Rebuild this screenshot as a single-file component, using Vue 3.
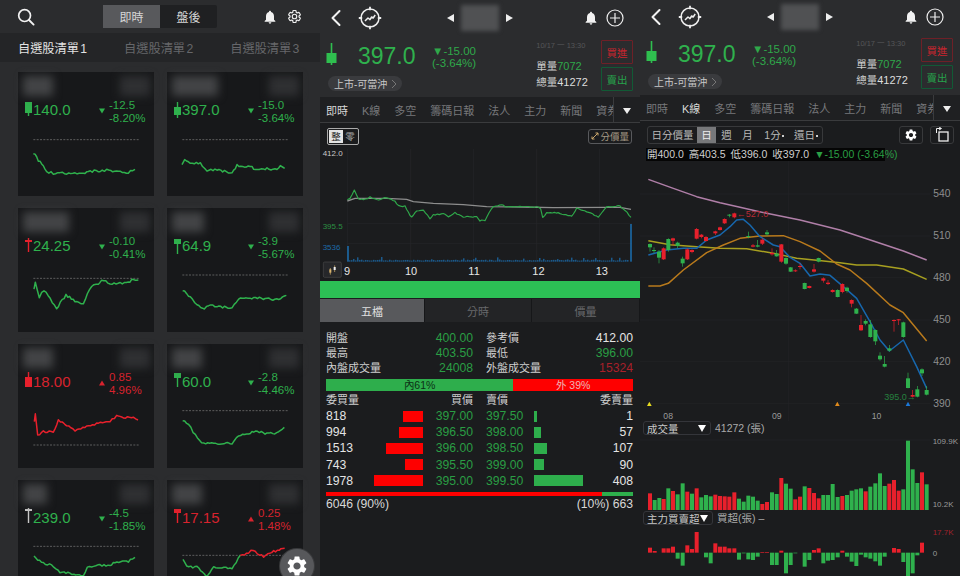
<script setup>
const GEAR = 'M19.14 12.94c.04-.3.06-.61.06-.94 0-.32-.02-.64-.07-.94l2.03-1.58a.49.49 0 0 0 .12-.61l-1.92-3.32a.488.488 0 0 0-.59-.22l-2.39.96c-.5-.38-1.03-.7-1.62-.94l-.36-2.54a.484.484 0 0 0-.48-.41h-3.84c-.24 0-.43.17-.47.41l-.36 2.54c-.59.24-1.13.57-1.62.94l-2.39-.96c-.22-.08-.47 0-.59.22L2.74 8.87c-.12.21-.08.47.12.61l2.03 1.58c-.05.3-.09.63-.09.94s.02.64.07.94l-2.03 1.58a.49.49 0 0 0-.12.61l1.92 3.32c.12.22.37.29.59.22l2.39-.96c.5.38 1.03.7 1.62.94l.36 2.54c.05.24.24.41.48.41h3.84c.24 0 .44-.17.47-.41l.36-2.54c.59-.24 1.13-.56 1.62-.94l2.39.96c.22.08.47 0 .59-.22l1.92-3.32c.12-.22.07-.47-.12-.61l-2.01-1.58zM12 15.6c-1.98 0-3.6-1.62-3.6-3.6s1.62-3.6 3.6-3.6 3.6 1.62 3.6 3.6-1.62 3.6-3.6 3.6z'
const BELL = 'M12 22c1.1 0 2-.9 2-2h-4c0 1.1.89 2 2 2zm6-6v-5c0-3.07-1.64-5.64-4.5-6.32V4c0-.83-.67-1.5-1.5-1.5s-1.5.67-1.5 1.5v.68C7.63 5.36 6 7.92 6 11v5l-2 2v1h16v-1l-2-2z'

const GREEN = '#2fb14d'
const RED = '#e8202c'

// small deterministic wobble so the lines look like ticks
const noise = (i) => {
  const v = Math.sin(i * 12.9898) * 43758.5453
  return v - Math.floor(v) - 0.5
}
const wobble = (pts, amp = 7, step = 6) => {
  const out = []
  let n = 0
  for (let i = 0; i < pts.length - 1; i++) {
    const [x1, y1] = pts[i]
    const [x2, y2] = pts[i + 1]
    const count = Math.max(1, Math.round((x2 - x1) / step))
    for (let k = 0; k < count; k++) {
      const t = k / count
      out.push(`${x1 + (x2 - x1) * t},${(y1 + (y2 - y1) * t + noise(++n + x1) * amp).toFixed(1)}`)
    }
  }
  out.push(pts[pts.length - 1].join(','))
  return out.join(' ')
}
const plain = (pts) => pts.map((p) => p.join(',')).join(' ')

// chart coordinates are 3x pixels, taken from the card's column and row
const cards = [
  { price: '140.0', d1: '-12.5', d2: '-8.20%', up: false, c: { w: [2, 16], b: [2, 13], wc: GREEN, bc: GREEN }, name: 30, vx: 54, vy: 372, dash: 419,
    lines: [{ col: GREEN, pts: [[100,458],[115,480],[130,495],[140,515],[160,520],[180,517],[200,520],[250,520],[265,514],[300,512],[320,510],[350,515],[385,518],[405,508]] }] },
  { price: '397.0', d1: '-15.0', d2: '-3.64%', up: false, c: { w: [2, 18], b: [7, 15], wc: GREEN, bc: GREEN }, name: 46, vx: 500, vy: 372, dash: 419,
    lines: [{ col: GREEN, pts: [[545,495],[553,478],[570,490],[600,490],[620,510],[650,510],[695,518],[710,497],[755,500],[765,510],[800,505],[830,510],[840,498],[853,505]] }] },
  { price: '24.25', d1: '-0.10', d2: '-0.41%', up: false, c: { w: [2, 16], b: [4, 6], wc: RED, bc: RED }, name: 46, vx: 54, vy: 180, dash: 235,
    lines: [{ col: GREEN, pts: [[102,270],[106,245],[118,290],[132,270],[150,295],[170,325],[198,285],[225,302],[250,312],[262,280],[275,258],[295,252],[305,238],[330,250],[385,248],[400,238],[415,240]] }] },
  { price: '64.9', d1: '-3.9', d2: '-5.67%', up: false, c: { w: [3, 18], b: [3, 8], wc: GREEN, bc: GREEN }, name: 32, vx: 500, vy: 180, dash: 225,
    lines: [{ col: GREEN, pts: [[547,270],[570,290],[590,315],[612,328],[625,315],[650,320],[695,323],[715,295],[760,295],[800,295],[835,300],[858,286]] }] },
  { price: '18.00', d1: '0.85', d2: '4.96%', up: true, c: { w: [0, 15], b: [5, 15], wc: RED, bc: RED }, name: 30, vx: 54, vy: 198, dash: 345,
    lines: [{ col: RED, pts: [[103,275],[106,250],[113,315],[130,305],[160,305],[175,272],[200,285],[225,300],[260,290],[290,280],[330,272],[350,258],[365,263],[400,260],[414,270]] }] },
  { price: '60.0', d1: '-2.8', d2: '-4.46%', up: false, c: { w: [1, 15], b: [1, 6], wc: GREEN, bc: GREEN }, name: 30, vx: 500, vy: 198, dash: 242,
    lines: [{ col: GREEN, pts: [[547,270],[565,285],[585,315],[610,342],[640,340],[695,340],[715,315],[745,312],[760,305],[800,310],[835,308],[852,292]] }] },
  { price: '239.0', d1: '-4.5', d2: '-1.85%', up: false, c: { w: [0, 15], b: [1, 3], wc: '#c8c8c8', bc: '#c8c8c8' }, name: 24, vx: 54, vy: 606, dash: 649,
    lines: [{ col: GREEN, pts: [[102,680],[130,700],[155,705],[180,725],[210,730],[250,738],[262,710],[300,705],[330,705],[345,695],[385,695],[405,682]] }] },
  { price: '17.15', d1: '0.25', d2: '1.48%', up: true, c: { w: [1, 15], b: [1, 5], wc: RED, bc: RED }, name: 30, vx: 500, vy: 606, dash: 676,
    lines: [
      { col: GREEN, pts: [[548,690],[565,712],[590,710],[618,738],[640,710],[695,716],[720,676]] },
      { col: RED, pts: [[720,676],[745,670],[752,660],[790,678],[820,665],[853,655]] },
    ] },
]

const tabs = ['即時', 'K線', '多空', '籌碼日報', '法人', '主力', '新聞', '資券']

const stats = [
  ['開盤', '400.00', 'g', '參考價', '412.00', 'w'],
  ['最高', '403.50', 'g', '最低', '396.00', 'g'],
  ['內盤成交量', '24008', 'g', '外盤成交量', '15324', 'r'],
]
const ladder = [
  [818, 20, '397.00', '397.50', 3, 1],
  [994, 24, '396.50', '398.00', 7, 57],
  [1513, 37, '396.00', '398.50', 13, 107],
  [743, 18, '395.50', '399.00', 10, 90],
  [1978, 49, '395.00', '399.50', 49, 408],
]

const tickGreen = [[82,240],[90,235],[103,210],[115,235],[130,240],[150,232],[170,240],[200,233],[225,243],[235,258],[255,258],[270,285],[275,290],[290,272],[310,270],[330,295],[340,285],[370,280],[385,290],[405,278],[430,290],[470,290],[480,302],[495,300],[520,258],[545,255],[560,260],[600,260],[650,260],[662,265],[668,292],[680,278],[720,280],[755,290],[770,265],[800,275],[835,290],[860,262],[900,258],[915,270],[933,292]]
const tickAvg = [[82,243],[105,235],[200,235],[260,238],[280,245],[340,250],[430,254],[500,260],[600,261],[700,263],[860,262],[900,262],[933,268]]
const tickVol = []
for (let x = 88; x < 925; x += 6) {
  tickVol.push({ x, h: 3 + Math.abs(noise(x)) * (Math.abs(noise(x + 1)) > 0.38 ? 22 : 6) })
}

const candles = [
  [30,220,245,222,232,'g'],[42,232,250,240,243,'g'],[57,240,280,245,263,'g'],[71,232,270,235,268,'r'],[85,205,245,207,240,'g'],[99,203,225,205,212,'r'],[113,215,235,218,228,'g'],[128,260,290,266,280,'g'],[142,235,270,238,268,'r'],[156,238,250,240,246,'r'],
  [170,174,208,177,206,'r'],[184,192,205,194,201,'r'],[198,198,215,201,213,'r'],[226,182,195,184,190,'r'],[240,170,182,172,180,'r'],[254,145,162,147,160,'r'],[268,132,142,134,137,'g'],[283,128,145,130,142,'r'],[325,185,205,198,201,'g'],[339,222,232,226,230,'r'],
  [353,210,232,226,230,'g'],[367,205,225,209,221,'r'],[381,180,198,187,193,'g'],[396,235,257,249,253,'r'],[410,240,260,251,259,'g'],[424,222,278,223,275,'r'],[438,262,284,264,281,'g'],[452,291,306,292,305,'g'],[466,298,306,301,304,'r'],[480,280,298,288,291,'r'],
  [494,338,358,339,357,'g'],[508,347,355,348,354,'r'],[522,282,308,298,305,'r'],[536,263,277,264,275,'g'],[550,322,338,325,332,'r'],[564,330,345,338,342,'r'],[578,358,368,360,366,'r'],[593,358,382,360,381,'g'],[607,340,370,342,366,'r'],[621,350,368,353,363,'g'],
  [635,388,412,390,401,'r'],[649,414,432,416,431,'g'],[663,435,483,465,481,'r'],[677,448,466,453,461,'g'],[691,450,503,463,501,'g'],[706,478,525,480,514,'g'],[720,547,572,557,568,'g'],[734,558,592,582,590,'g'],[748,525,545,535,542,'g'],[762,448,485,450,453,'r'],
  [776,447,465,448,451,'r'],[790,455,503,457,501,'g'],[804,608,655,625,654,'g'],[818,660,682,675,680,'r'],[832,648,682,658,680,'g'],[846,595,618,598,610,'g'],[860,648,676,660,674,'g'],
].map(([x, wt, wb, bt, bb, c]) => ({ x, wt, wb, bt, bb, col: c === 'g' ? GREEN : RED }))

const maLines = [
  { col: '#b07fa8', pts: [[25,28],[100,55],[170,80],[240,98],[300,112],[380,130],[480,150],[600,180],[700,213],[790,243],[860,270]] },
  { col: '#a8a020', pts: [[25,212],[90,224],[170,230],[240,235],[320,236],[400,250],[470,265],[530,271],[600,278],[650,285],[710,285],[790,297],[860,328]] },
  { col: '#b97a1c', pts: [[25,348],[60,348],[85,340],[130,300],[200,248],[250,225],[300,205],[360,198],[430,197],[480,215],[540,243],[590,282],[630,300],[680,340],[750,405],[790,428],[860,513]] },
  { col: '#1767ad', pts: [[25,255],[80,240],[130,235],[170,235],[200,210],[240,195],[270,170],[290,150],[310,148],[330,165],[360,200],[400,225],[420,230],[450,262],[480,280],[510,318],[540,312],[570,316],[610,350],[650,385],[690,455],[720,510],[748,543],[790,510],[830,590],[860,655]] },
]
const axis = [[540, 82], [510, 208], [480, 333], [450, 460], [420, 585], [390, 711]]
const periods = ['日', '週', '月']

const volumes = [
  [30,'r',280],[44,'g',300],[58,'g',294],[71,'r',297],[85,'g',265],[99,'r',273],[113,'g',283],[128,'g',250],[142,'r',275],[156,'g',281],[170,'r',265],[184,'g',292],[198,'g',285],[212,'g',289],[226,'r',284],[240,'r',288],[254,'r',289],[268,'r',290],[283,'r',277],[297,'g',296],
  [311,'g',305],[325,'g',287],[339,'g',290],[353,'g',302],[367,'r',312],[381,'r',306],[396,'g',277],[410,'g',282],[424,'r',234],[438,'g',251],[452,'g',266],[466,'r',298],[480,'r',290],[494,'g',259],[508,'r',264],[522,'r',279],[536,'r',295],[550,'g',285],[564,'g',285],[578,'g',252],
  [593,'g',291],[607,'r',288],[621,'g',285],[635,'g',272],[649,'g',268],[663,'g',265],[677,'r',274],[691,'g',260],[706,'g',250],[720,'g',220],[734,'g',258],[748,'r',251],[762,'r',240],[776,'r',272],[790,'g',268],[804,'g',122],[818,'g',208],[832,'g',249],[846,'r',217],[860,'g',253],
].map(([x, c, top]) => ({ x, top, col: c === 'g' ? GREEN : RED }))

const netBars = [
  [30,443],[44,453],[71,445],[85,445],[99,440],[113,476],[128,497],[142,436],[156,447],[170,396],[198,472],[212,490],[226,430],[240,440],[254,440],[268,445],[283,445],[297,479],[311,460],[325,478],[339,480],[353,470],[367,456],[381,456],[396,495],[410,495],[424,452],[438,520],[452,495],[466,460],
  [494,500],[508,480],[522,450],[536,445],[550,490],[564,482],[578,480],[593,472],[607,452],[621,470],[635,485],[649,498],[663,464],[677,472],[691,476],[706,484],[720,497],[734,470],[762,444],[776,447],[790,486],[804,528],[818,520],[832,466],[846,428],
].map(([x, v]) => ({ x, y: Math.min(v, 458), h: Math.abs(v - 458), col: v < 458 ? RED : GREEN }))
</script>

<template>
  <div class="screen">
    <!-- watchlist -->
    <section class="panel list-panel">
      <header class="nav">
        <svg class="search" width="18" height="18" viewBox="0 0 18 18">
          <circle cx="7.6" cy="7.6" r="5.9" fill="none" stroke="#f2f2f2" stroke-width="1.7" />
          <path d="M12 12l4.6 4.6" stroke="#f2f2f2" stroke-width="1.9" stroke-linecap="round" />
        </svg>
        <div class="session">
          <span class="session-item active">即時</span>
          <span class="session-item">盤後</span>
        </div>
        <svg class="bell" width="16" height="16" viewBox="0 0 24 24"><path :d="BELL" fill="#f2f2f2" /></svg>
        <svg class="cog" width="15" height="15" viewBox="0 0 24 24"><path :d="GEAR" fill="none" stroke="#eee" stroke-width="1.9" /></svg>
      </header>

      <div class="list-tabs">
        <span class="active">自選股清單 1</span>
        <span>自選股清單 2</span>
        <span>自選股清單 3</span>
      </div>

      <div class="cards">
        <article v-for="card in cards" :key="card.price" class="card">
          <div class="card-head">
            <i class="blur" :style="{ width: card.name + 'px' }"></i>
            <i class="blur dim"></i>
          </div>
          <div class="card-quote" :class="card.up ? 'red' : 'green'">
            <svg class="mini-candle" width="9" height="24" viewBox="0 0 9 24">
              <rect x="3.8" :y="card.c.w[0]" width="1.4" :height="card.c.w[1] - card.c.w[0]" :fill="card.c.wc" />
              <rect x="1" :y="card.c.b[0]" width="7" :height="card.c.b[1] - card.c.b[0]" :fill="card.c.bc" />
            </svg>
            <span class="card-price" :class="{ red: card.up }">{{ card.price }}</span>
            <svg class="card-arrow" width="6" height="6" viewBox="0 0 6 6">
              <path :d="card.up ? 'M3 .5L6 5.5H0z' : 'M0 .5H6L3 5.5z'" fill="currentColor" />
            </svg>
            <span class="card-diff"><b>{{ card.d1 }}</b><b>{{ card.d2 }}</b></span>
          </div>
          <svg class="spark" width="136" height="72" :viewBox="`${card.vx} ${card.vy} 408 216`">
            <line :x1="card.vx + 46" :x2="card.vx + 362" :y1="card.dash" :y2="card.dash" stroke="#6a6a6a" stroke-width="2.5" stroke-dasharray="6 4" />
            <polyline v-for="(l, i) in card.lines" :key="i" :points="wobble(l.pts)" fill="none" :stroke="l.col" stroke-width="4.5" stroke-linejoin="round" />
          </svg>
        </article>
      </div>

      <div class="fab">
        <svg width="24" height="24" viewBox="0 0 24 24"><path :d="GEAR" fill="#fff" /></svg>
      </div>
    </section>

    <!-- stock detail, intraday then k-line -->
    <section v-for="view in ['live', 'kline']" :key="view" class="panel detail" :class="view">
      <header class="nav detail-nav">
        <svg class="back" width="12" height="18" viewBox="0 0 12 18"><path d="M9.5 2L2.5 9l7 7" fill="none" stroke="#f2f2f2" stroke-width="2" stroke-linecap="round" stroke-linejoin="round" /></svg>
        <svg class="target" width="24" height="24" viewBox="0 0 24 24">
          <circle cx="12" cy="12" r="9" fill="none" stroke="#eee" stroke-width="1.5" />
          <path d="M12 .8v3.4M12 19.8v3.4M.8 12h3.4M19.8 12h3.4" stroke="#eee" stroke-width="1.8" />
          <path d="M7 15l3-3 2 1.600 1.600-2.600 1.600 1 2-3" fill="none" stroke="#eee" stroke-width="1.5" stroke-linejoin="round" />
        </svg>
        <div class="title">
          <svg width="7" height="8" viewBox="0 0 7 8"><path d="M7 0v8L0 4z" fill="#eee" /></svg>
          <i class="title-blur"></i>
          <svg width="7" height="8" viewBox="0 0 7 8"><path d="M0 0v8l7-4z" fill="#eee" /></svg>
        </div>
        <svg class="bell" width="16" height="16" viewBox="0 0 24 24"><path :d="BELL" fill="#f2f2f2" /></svg>
        <svg class="plus" width="18" height="18" viewBox="0 0 18 18">
          <circle cx="9" cy="9" r="8" fill="none" stroke="#eee" stroke-width="1.2" />
          <path d="M9 4v10M4 9h10" stroke="#eee" stroke-width="1.2" />
        </svg>
      </header>

      <div class="quote">
        <div class="quote-left">
          <div class="quote-main">
            <svg width="11" height="22" viewBox="0 0 11 22" class="big-candle">
              <rect x="4.7" y="0" width="1.6" height="22" fill="#2fbf4f" />
              <rect x="0.5" y="10" width="10" height="10" fill="#2fbf4f" />
            </svg>
            <span class="quote-price">397.0</span>
            <span class="quote-diff"><b>▼-15.00</b><b>(-3.64%)</b></span>
          </div>
          <span class="pill">上市-可當沖<svg width="6" height="10" viewBox="0 0 6 10"><path d="M1 1l4 4-4 4" fill="none" stroke="#777" /></svg></span>
        </div>
        <div class="quote-right">
          <small>10/17 一 13:30</small>
          <span>單量<em>7072</em></span>
          <span>總量<strong>41272</strong></span>
        </div>
        <div class="trade">
          <span class="buy">買進</span>
          <span class="sell">賣出</span>
        </div>
      </div>

      <nav class="tabs">
        <div class="tab-scroll">
          <span v-for="(t, i) in tabs" :key="t" :class="{ active: (view === 'live' && i === 0) || (view === 'kline' && i === 1) }">{{ t }}</span>
        </div>
        <button class="tab-more"><svg width="8" height="6" viewBox="0 0 8 6"><path d="M0 0h8L4 6z" fill="#eee" /></svg></button>
      </nav>

      <template v-if="view === 'live'">
        <div class="tool">
          <div class="toggle"><span class="on">整</span><span>零</span></div>
          <button class="ghost">
            <svg width="8" height="8" viewBox="0 0 8 8"><path d="M1 7l6-6M4.500 1H7v2.500M1 4.500V7h2.500" fill="none" stroke="#c9a56a" /></svg>分價量
          </button>
        </div>

        <svg class="tick-chart" width="320" height="132" viewBox="0 87 960 396">
          <g stroke="#26272a" stroke-width="2">
            <line v-for="x in [82, 272, 460, 650, 838]" :key="x" :x1="x" :x2="x" y1="87" y2="425" />
            <line v-for="y in [310, 370]" :key="y" x1="82" x2="936" :y1="y" :y2="y" />
          </g>
          <rect v-for="b in tickVol" :key="b.x" :x="b.x" :y="425 - b.h" width="3" :height="b.h" fill="#1c7ac4" />
          <rect x="82" y="378" width="4" height="47" fill="#1c7ac4" />
          <rect x="931" y="312" width="4" height="113" fill="#1c7ac4" />
          <polyline :points="plain(tickAvg)" fill="none" stroke="#8d8d8d" stroke-width="4" />
          <polyline :points="wobble(tickGreen, 4)" fill="none" stroke="#2fa84a" stroke-width="3.5" stroke-linejoin="round" />
          <text x="8" y="109" class="t-label" fill="#c9c9c9">412.0</text>
          <text x="8" y="328" class="t-label" fill="#2b8f43">395.5</text>
          <text x="8" y="389" class="t-label" fill="#1c6aa8">3536</text>
          <rect x="10" y="426" width="54" height="46" rx="4" fill="#26272a" stroke="#4a4a4a" stroke-width="2" />
          <path d="M31 444v20M44 436v20" stroke="#d9b36c" stroke-width="2" />
          <rect x="28" y="448" width="6" height="10" fill="#d9b36c" />
          <rect x="41" y="441" width="6" height="9" fill="#eee" />
          <text v-for="(h, i) in [9, 10, 11, 12, 13]" :key="h" :x="[72, 255, 445, 637, 827][i]" y="465" class="t-time" fill="#e6e6e6">{{ h }}</text>
        </svg>

        <div class="green-bar"></div>

        <div class="sub-tabs">
          <span class="active">五檔</span>
          <span>分時</span>
          <span>價量</span>
        </div>

        <div class="stats">
          <div v-for="row in stats" :key="row[0]" class="stat-row">
            <span>{{ row[0] }}</span><span class="val" :class="row[2]">{{ row[1] }}</span>
            <span class="col-b">{{ row[3] }}</span><span class="val" :class="row[5]">{{ row[4] }}</span>
          </div>

          <div class="ratio">
            <span class="in">內61%</span>
            <span class="out">外 39%</span>
          </div>

          <div class="stat-row ladder-head">
            <span>委買量</span><span class="right">買價</span><span class="col-b">賣價</span><span class="right">委賣量</span>
          </div>
          <div v-for="row in ladder" :key="row[0]" class="ladder-row">
            <div class="side">
              <span class="qty">{{ row[0] }}</span>
              <i class="bid" :style="{ width: row[1] + 'px' }"></i>
              <span class="p bidp">{{ row[2] }}</span>
            </div>
            <div class="side">
              <span class="p askp">{{ row[3] }}</span>
              <i class="ask" :style="{ width: row[4] + 'px' }"></i>
              <span class="qty right">{{ row[5] }}</span>
            </div>
          </div>

          <div class="balance"><i></i></div>
          <div class="totals"><span>6046 (90%)</span><span>(10%) 663</span></div>
        </div>
      </template>

      <template v-else>
        <div class="tool k-tool">
          <div class="period">
            <span>日分價量</span>
            <span class="sel">日</span>
            <span>週</span>
            <span>月</span>
            <span>1分<u></u></span>
            <span>還日<u></u></span>
          </div>
          <div class="k-btns">
            <button><svg width="14" height="14" viewBox="0 0 24 24"><path :d="GEAR" fill="#fff" /></svg></button>
            <button>
              <svg width="15" height="15" viewBox="0 0 15 15">
                <rect x="4" y="5" width="9" height="9" fill="none" stroke="#eee" stroke-width="1.3" />
                <path d="M1.500 6V1.500H6M4 0L6.500 1.500 4 3" fill="none" stroke="#eee" />
              </svg>
            </button>
          </div>
        </div>

        <div class="ohlc">
          <span>開400.0</span><span>高403.5</span><span>低396.0</span><span>收397.0</span><b>▼-15.00 (-3.64%)</b>
        </div>

        <svg class="k-chart" width="320" height="260" viewBox="0 -27 960 780">
          <line v-for="a in axis" :key="a[0]" x1="0" x2="870" :y1="a[1] - 10" :y2="a[1] - 10" stroke="#232427" stroke-width="2" />
          <line x1="445" x2="445" y1="-27" y2="753" stroke="#232427" stroke-width="2" />
          <polyline v-for="m in maLines" :key="m.col" :points="plain(m.pts)" fill="none" :stroke="m.col" stroke-width="4.5" stroke-linejoin="round" />
          <g v-for="c in candles" :key="c.x">
            <rect :x="c.x - 1" :y="c.wt" width="2" :height="c.wb - c.wt" :fill="c.col" />
            <rect :x="c.x - 6" :y="c.bt" width="12" :height="c.bb - c.bt" :fill="c.col" />
          </g>
          <text x="290" y="141" class="k-label" fill="#b92a35">←527.0</text>
          <text x="733" y="691" class="k-label" fill="#26803f">395.0→</text>
          <text v-for="a in axis" :key="a[0]" x="880" :y="a[1]" class="k-axis">{{ a[0] }}</text>
          <path d="M28 695l7 13H21z" fill="#e8dc20" />
          <path d="M592 695l7 13h-14z" fill="#e08a1c" />
          <path d="M804 695l7 13h-14z" fill="#1c78d8" />
          <text x="70" y="746" class="k-date">08</text>
          <text x="396" y="746" class="k-date">09</text>
          <text x="695" y="746" class="k-date">10</text>
        </svg>

        <div class="picker">
          <div class="picker-box w1">成交量<svg width="8" height="7" viewBox="0 0 8 7"><path d="M0 0h8L4 7z" fill="#fff" /></svg></div>
          <span>41272 (張)</span>
        </div>

        <svg class="vol" width="320" height="74" viewBox="0 111 960 222">
          <line x1="0" x2="870" y1="120" y2="120" stroke="#232427" stroke-width="2" />
          <rect v-for="v in volumes" :key="v.x" :x="v.x - 6" :y="v.top" width="12" :height="330 - v.top" :fill="v.col" />
          <text x="878" y="131" class="k-vol">109.9K</text>
          <text x="878" y="320" class="k-vol">10.2K</text>
        </svg>

        <div class="picker second">
          <div class="picker-box w2">主力買賣超<svg width="8" height="7" viewBox="0 0 8 7"><path d="M0 0h8L4 7z" fill="#fff" /></svg></div>
          <span>買超(張) –</span>
        </div>

        <svg class="net" width="320" height="50" viewBox="0 378 960 150">
          <rect v-for="n in netBars" :key="n.x" :x="n.x - 6" :y="n.y" width="12" :height="n.h" :fill="n.col" />
          <text x="878" y="405" class="k-vol net-max">17.7K</text>
          <text x="878" y="468" class="k-vol">0</text>
        </svg>
      </template>
    </section>
  </div>
</template>

<style>
html, body {
  margin: 0;
  background: #1b1c1e;
}
</style>

<style scoped>
* {
  box-sizing: border-box;
}

.screen {
  display: flex;
  width: 960px;
  height: 576px;
  overflow: hidden;
  font-family: "Liberation Sans", "Noto Sans CJK TC", sans-serif;
  color: #ddd;
}

.panel {
  position: relative;
  flex: 0 0 320px;
  height: 576px;
  overflow: hidden;
}

.green { color: #2fb14d; }
.red { color: #d8232e; }

/* ---- nav ---- */
.nav {
  display: flex;
  align-items: center;
  height: 33px;
  background: #2b2c2e;
}

.search { margin-left: 17px; }

.session {
  display: flex;
  margin-left: 68px;
  height: 23px;
  background: #1f2022;
  border-radius: 2px;
  font-size: 12px;
}

.session-item {
  display: flex;
  align-items: center;
  justify-content: center;
  width: 57px;
  color: #d5d5d5;
}

.session-item.active {
  background: #58595c;
}

.list-panel .bell { margin-left: 45px; }
.cog { margin-left: 9px; }

/* ---- watchlist ---- */
.list-panel {
  background: #2b2c2e;
}

.list-tabs {
  display: flex;
  gap: 37px;
  align-items: center;
  height: 29px;
  padding-left: 18px;
  background: #242527;
  font-size: 12.2px;
  word-spacing: -2px;
  color: #66676a;
  white-space: nowrap;
}

.list-tabs .active { color: #e2e2e2; }

.cards {
  display: grid;
  grid-template-columns: 136px 136px;
  column-gap: 13px;
  row-gap: 12px;
  padding: 10px 0 0 18px;
}

.card {
  height: 124px;
  background: #17181a;
}

.card-head {
  display: flex;
  justify-content: space-between;
  height: 28px;
  padding: 4px 4px 4px 5px;
}

.blur {
  display: block;
  height: 20px;
  background: #434446;
  filter: blur(4px);
}

.blur.dim {
  width: 30px;
  background: #2f3032;
}

.card-quote {
  display: flex;
  align-items: flex-start;
  height: 24px;
}

.mini-candle { margin-left: 6px; flex: none; }

.card-price {
  width: 66px;
  font-size: 15px;
  line-height: 20px;
  color: #2fb14d;
}

.card-price.red { color: #d8232e; }

.card-arrow {
  flex: none;
  margin: 8px 4px 0 0;
}

.card-diff {
  display: flex;
  flex-direction: column;
  margin-top: -1px;
  font-size: 11.5px;
  line-height: 12.5px;
}

.card-diff b { font-weight: 400; }

.spark { display: block; }

.fab {
  position: absolute;
  right: 6px;
  bottom: -7px;
  display: flex;
  align-items: center;
  justify-content: center;
  width: 34px;
  height: 34px;
  border-radius: 50%;
  background: #57585b;
  box-shadow: 0 0 0 1px #3a3b3d;
}

/* ---- detail ---- */
.detail {
  background: #1b1c1e;
}

.detail-nav {
  height: 35px;
  padding-left: 10px;
}

.kline .detail-nav { height: 33px; }

.target { margin-left: 16px; }

.title {
  display: flex;
  align-items: center;
  gap: 7px;
  margin-left: 65px;
}

.title-blur {
  width: 38px;
  height: 26px;
  background: #505153;
  filter: blur(2px);
}

.detail .bell { margin-left: 70px; }
.plus { margin-left: 7px; }

.quote {
  display: flex;
  height: 62px;
  padding: 4px 7px 0 6px;
  background: #2b2c2e;
}

.quote-left { width: 210px; }

.quote-main {
  display: flex;
  height: 35px;
}

.big-candle { margin-top: 4px; flex: none; }

.quote-price {
  margin-left: 21px;
  width: 74px;
  margin-top: 4px;
  font-size: 23px;
  line-height: 26px;
  color: #2fb14d;
}

.quote-diff {
  display: flex;
  flex-direction: column;
  margin-top: 6px;
  font-size: 11.5px;
  line-height: 12px;
  color: #2fa84a;
}

.quote-diff b { font-weight: 400; }

.pill {
  display: inline-flex;
  align-items: center;
  gap: 4px;
  height: 15px;
  margin-left: 2px;
  padding: 0 5px 0 6px;
  border-radius: 8px;
  background: #3a3b3e;
  font-size: 10px;
  color: #c8c8c8;
}

.quote-right {
  display: flex;
  flex-direction: column;
  width: 65px;
  margin-left: 1px;
  font-size: 10.5px;
  line-height: 16px;
  color: #ccc;
  white-space: nowrap;
}

.quote-right small {
  margin-bottom: 6px;
  font-size: 7.5px;
  line-height: 13px;
  color: #555658;
}

.quote-right em {
  font-style: normal;
  font-size: 11px;
  color: #2fa84a;
}

.quote-right strong {
  font-weight: 400;
  font-size: 11px;
  color: #ddd;
}

.trade {
  display: flex;
  flex-direction: column;
  gap: 3px;
  margin-left: auto;
  padding-top: 1px;
}

.trade span {
  display: flex;
  align-items: center;
  justify-content: center;
  width: 32px;
  height: 24px;
  border-radius: 1px;
  font-size: 10.5px;
}

.buy { border: 1px solid #6e2027; color: #c9252f; }
.sell { border: 1px solid #115a35; color: #27a24c; }

.tabs {
  display: flex;
  height: 26px;
  background: #1f2022;
  border-bottom: 1px solid #3a3b3d;
}

.tab-scroll {
  display: flex;
  align-items: center;
  gap: 14px;
  width: 294px;
  padding-left: 6px;
  overflow: hidden;
  font-size: 11px;
  color: #77787b;
  white-space: nowrap;
  border-right: 1px solid #3a3b3d;
}

.tab-scroll .active { color: #d8d8d8; }

.tab-more {
  flex: 1;
  border: 0;
  padding: 0;
  background: none;
}

.tool {
  display: flex;
  align-items: center;
  justify-content: space-between;
  height: 26px;
  padding: 0 8px 0 7px;
  background: #1b1c1e;
}

.toggle {
  display: flex;
  padding: 1px;
  border: 1px solid #aaa;
  border-radius: 2px;
  font-size: 9.5px;
  line-height: 13px;
}

.toggle span {
  width: 14px;
  text-align: center;
  color: #aaa;
}

.toggle .on {
  background: #e4e4e4;
  color: #222;
}

.ghost {
  display: flex;
  align-items: center;
  gap: 1px;
  height: 15px;
  padding: 0 2px;
  border: 1px solid #58595c;
  border-radius: 3px;
  background: none;
  font-family: inherit;
  font-size: 9.5px;
  color: #a59a85;
}

.tick-chart,
.k-chart,
.vol,
.net {
  display: block;
}

.t-label {
  font-size: 24px;
  font-family: "Liberation Sans", sans-serif;
}

.t-time {
  font-size: 33px;
  font-family: "Liberation Sans", sans-serif;
}

.green-bar {
  height: 17px;
  background: #2cc055;
}

.sub-tabs {
  display: grid;
  grid-template-columns: 105px 107px 108px;
  height: 23px;
  margin-top: 1px;
  font-size: 11px;
  color: #68696c;
}

.sub-tabs span {
  display: flex;
  align-items: center;
  justify-content: center;
  background: #232426;
  border-right: 1px solid #161719;
}

.sub-tabs .active {
  background: #58595c;
  color: #e0e0e0;
}

.stats {
  padding: 9px 7px 0 6px;
  font-size: 11px;
  color: #cfcfcf;
}

.stat-row {
  display: grid;
  grid-template-columns: 67px 80px 80px 80px;
  line-height: 15px;
  white-space: nowrap;
}

.col-b { padding-left: 13px; }

.val {
  text-align: right;
  font-size: 12.2px;
}

.val.g { color: #2a9e44; }
.val.w { color: #e4e4e4; }
.val.r { color: #a8202a; }

.ratio {
  display: flex;
  height: 12px;
  margin-top: 3px;
  font-size: 10.5px;
  line-height: 12px;
  text-align: center;
}

.ratio .in {
  width: 61%;
  background: #2eae4c;
  color: #0c3015;
}

.ratio .out {
  flex: 1;
  background: #fe0000;
  color: #f0b5b5;
}

.ladder-head { margin-top: 2px; }

.right { text-align: right; }

.ladder-row {
  display: flex;
  height: 16.2px;
  align-items: center;
  font-size: 12.2px;
  color: #e4e4e4;
}

.side {
  display: flex;
  align-items: center;
  width: 147px;
}

.side + .side { margin-left: 13px; }

.qty { flex: 1; }

.p { color: #2a9e44; }
.bidp { width: 50px; text-align: right; }
.askp { width: 48px; }

.bid,
.ask {
  display: block;
  height: 11px;
}

.bid { background: #fe0000; }
.ask { background: #2eae4c; }

.balance {
  height: 4px;
  margin-top: 3px;
  background: #2eae4c;
}

.balance i {
  display: block;
  width: 90%;
  height: 4px;
  background: #fe0000;
}

.totals {
  display: flex;
  justify-content: space-between;
  margin-top: 1px;
  font-size: 12.2px;
  line-height: 15px;
  color: #d8d8d8;
}

/* ---- k-line ---- */
.k-tool {
  height: 27px;
  padding: 0 6px 0 7px;
}

.period {
  display: grid;
  grid-template-columns: 49px 19px 21px 21px 32px 32px;
  width: 176px;
  height: 18px;
  border: 1px solid #38393b;
  border-radius: 3px;
  font-size: 10.5px;
  line-height: 16px;
  text-align: center;
  color: #b9b9b9;
  white-space: nowrap;
}

.period .sel {
  background: #77787a;
  color: #eee;
}

.period u {
  display: inline-block;
  width: 2px;
  height: 2px;
  margin-left: 1px;
  vertical-align: middle;
  background: #ccc;
}

.k-btns {
  display: flex;
  gap: 7px;
}

.k-btns button {
  display: flex;
  align-items: center;
  justify-content: center;
  width: 24px;
  height: 18px;
  padding: 0;
  border: 1px solid #38393b;
  border-radius: 3px;
  background: none;
}

.ohlc {
  display: flex;
  gap: 5px;
  width: 239px;
  height: 13px;
  margin-left: 6px;
  padding-left: 1px;
  background: #050505;
  font-size: 10.5px;
  line-height: 13px;
  color: #cfcfcf;
  white-space: nowrap;
}

.ohlc b {
  font-weight: 400;
  color: #2a9e44;
}

.k-label {
  font-size: 27px;
  font-family: "Liberation Sans", sans-serif;
}

.k-axis {
  font-size: 31px;
  fill: #8e8e8e;
  font-family: "Liberation Sans", sans-serif;
}

.k-date {
  font-size: 26px;
  fill: #9a9a9a;
  font-family: "Liberation Sans", sans-serif;
}

.k-vol {
  font-size: 24px;
  fill: #9a9a9a;
  font-family: "Liberation Sans", sans-serif;
}

.net-max { fill: #a3222c; }

.picker {
  display: flex;
  align-items: flex-start;
  height: 16px;
  padding-left: 3px;
  font-size: 10.5px;
  color: #aaa;
}

.picker span {
  margin-left: 4px;
  line-height: 14px;
}

.picker-box {
  display: flex;
  align-items: center;
  justify-content: space-between;
  height: 14px;
  padding: 0 4px 0 3px;
  border: 1px solid #34353a;
  border-radius: 3px;
  color: #c8c8c8;
}

.w1 { width: 68px; }
.w2 { width: 70px; }

.second { height: 15px; }
</style>
